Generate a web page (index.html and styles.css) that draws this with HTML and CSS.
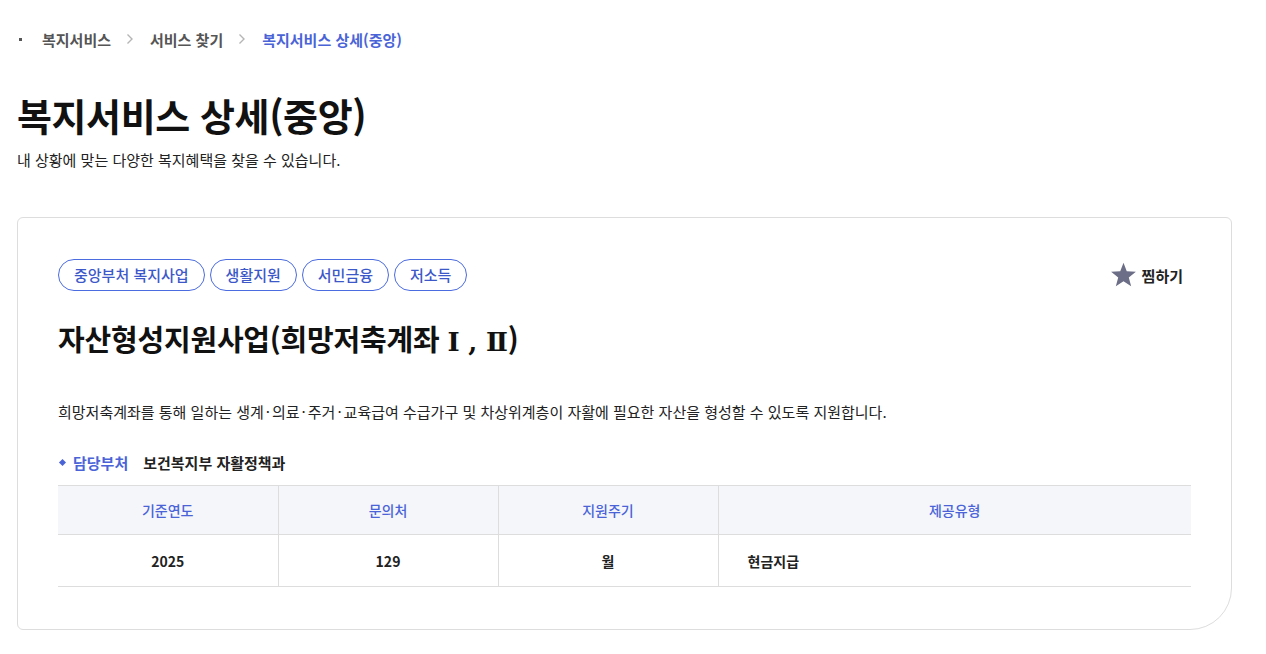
FILE: index.html
```html
<!DOCTYPE html>
<html lang="ko">
<head>
<meta charset="utf-8">
<title>복지서비스 상세(중앙)</title>
<link rel="stylesheet" href="styles.css">
</head>
<body>
<div class="page">
  <nav class="breadcrumb">
    <span class="bc-dot"></span>
    <span class="bc-item">복지서비스</span>
    <svg class="bc-sep" width="8" height="12" viewBox="0 0 8 12"><path d="M1.5 1.5 L6 6 L1.5 10.5" fill="none" stroke="#b5b5b5" stroke-width="1.4"/></svg>
    <span class="bc-item">서비스 찾기</span>
    <svg class="bc-sep" width="8" height="12" viewBox="0 0 8 12"><path d="M1.5 1.5 L6 6 L1.5 10.5" fill="none" stroke="#b5b5b5" stroke-width="1.4"/></svg>
    <span class="bc-item current">복지서비스 상세(중앙)</span>
  </nav>

  <h1 class="page-title">복지서비스 상세(중앙)</h1>
  <p class="page-desc">내 상황에 맞는 다양한 복지혜택을 찾을 수 있습니다.</p>

  <section class="card">
    <div class="card-top">
      <ul class="tags">
        <li class="tag">중앙부처 복지사업</li>
        <li class="tag">생활지원</li>
        <li class="tag">서민금융</li>
        <li class="tag">저소득</li>
      </ul>
      <button class="fav">
        <svg width="27" height="26" viewBox="0 0 24 23"><path d="M12 0.6 L14.9 8.2 L23 8.6 L16.7 13.7 L18.8 21.6 L12 17.1 L5.2 21.6 L7.3 13.7 L1 8.6 L9.1 8.2 Z" fill="#6b6e86"/></svg>
        <span>찜하기</span>
      </button>
    </div>

    <h2 class="card-title">자산형성지원사업(희망저축계좌 <span class="roman">Ⅰ , Ⅱ</span>)</h2>

    <p class="card-desc">희망저축계좌를 통해 일하는 생계<span class="mid">·</span>의료<span class="mid">·</span>주거<span class="mid">·</span>교육급여 수급가구 및 차상위계층이 자활에 필요한 자산을 형성할 수 있도록 지원합니다.</p>

    <div class="dept">
      <span class="dept-dot"></span>
      <span class="dept-label">담당부처</span>
      <span class="dept-value">보건복지부 자활정책과</span>
    </div>

    <table class="info">
      <thead>
        <tr>
          <th class="c1">기준연도</th>
          <th class="c2">문의처</th>
          <th class="c3">지원주기</th>
          <th class="c4">제공유형</th>
        </tr>
      </thead>
      <tbody>
        <tr>
          <td>2025</td>
          <td>129</td>
          <td>월</td>
          <td class="left">현금지급</td>
        </tr>
      </tbody>
    </table>
  </section>
</div>
</body>
</html>
```

FILE: styles.css
```css
* { box-sizing: border-box; }
html, body { margin: 0; padding: 0; background: #fff; }
body {
  font-family: "Noto Sans CJK KR", "Noto Sans", sans-serif;
  color: #222;
}
.page {
  padding: 26px 34px 0 17px;
}
.breadcrumb {
  display: flex;
  align-items: center;
  height: 26px;
  font-size: 15px;
  font-weight: 700;
}
.bc-dot {
  width: 3px;
  height: 3px;
  background: #555;
  margin: 0 20px 0 2px;
}
.bc-item { color: #555; }
.bc-item.current { color: #4a64d8; }
.bc-sep { margin: 0 16px 0 15px; }

.page-title {
  margin: 41px 0 0;
  font-size: 38px;
  font-weight: 700;
  letter-spacing: -0.4px;
  line-height: 44px;
  color: #111;
}
.page-desc {
  margin: 12px 0 0;
  font-size: 15px;
  line-height: 22px;
  color: #222;
}

.card {
  margin-top: 46px;
  border: 1px solid #ddd;
  border-radius: 6px 6px 42px 6px;
  padding: 41px 40px 42px 40px;
}
.card-top {
  display: flex;
  justify-content: space-between;
  align-items: center;
}
.tags {
  display: flex;
  gap: 5px;
  margin: 0;
  padding: 0;
  list-style: none;
}
.tag {
  height: 32px;
  line-height: 30px;
  padding: 0 15px;
  border: 1px solid #4b6be0;
  border-radius: 16px;
  font-size: 15px;
  font-weight: 500;
  color: #3d58c9;
}
.fav {
  display: flex;
  align-items: center;
  gap: 5px;
  border: 0;
  background: none;
  padding: 0;
  margin-right: 8px;
  font-family: inherit;
  font-size: 15px;
  font-weight: 700;
  color: #222;
}
.card-title {
  margin: 27px 0 0;
  height: 40px;
  font-size: 29px;
  font-weight: 700;
  letter-spacing: -0.2px;
  line-height: 40px;
  color: #111;
}
.roman {
  font-family: "DejaVu Serif", serif;
  font-size: 26px;
  line-height: 1;
}
.card-desc {
  margin: 43px 0 0;
  font-size: 15px;
  line-height: 22px;
  color: #222;
}
.mid { margin: 0 2px; }
.dept {
  display: flex;
  align-items: center;
  margin-top: 27px;
  height: 24px;
  font-size: 15px;
  font-weight: 700;
}
.dept-dot {
  width: 5px;
  height: 5px;
  background: #4a64d8;
  transform: rotate(45deg);
  margin: 0 8px 0 2px;
}
.dept-label { color: #4a64d8; margin-right: 15px; }
.dept-value { color: #222; }

.info {
  width: 100%;
  margin-top: 11px;
  border-collapse: collapse;
  font-size: 14px;
  table-layout: fixed;
}
.info th {
  height: 49px;
  background: #f5f6fa;
  color: #4a64d8;
  font-weight: 500;
  border-top: 1px solid #ddd;
  border-bottom: 1px solid #ddd;
  border-left: 1px solid #ddd;
}
.info th:first-child, .info td:first-child { border-left: 0; }
.info .c1, .info .c2, .info .c3 { width: 220px; }
.info td {
  height: 52px;
  text-align: center;
  font-weight: 700;
  color: #222;
  border-bottom: 1px solid #ddd;
  border-left: 1px solid #ddd;
}
.info td.left { text-align: left; padding-left: 29px; }
```
